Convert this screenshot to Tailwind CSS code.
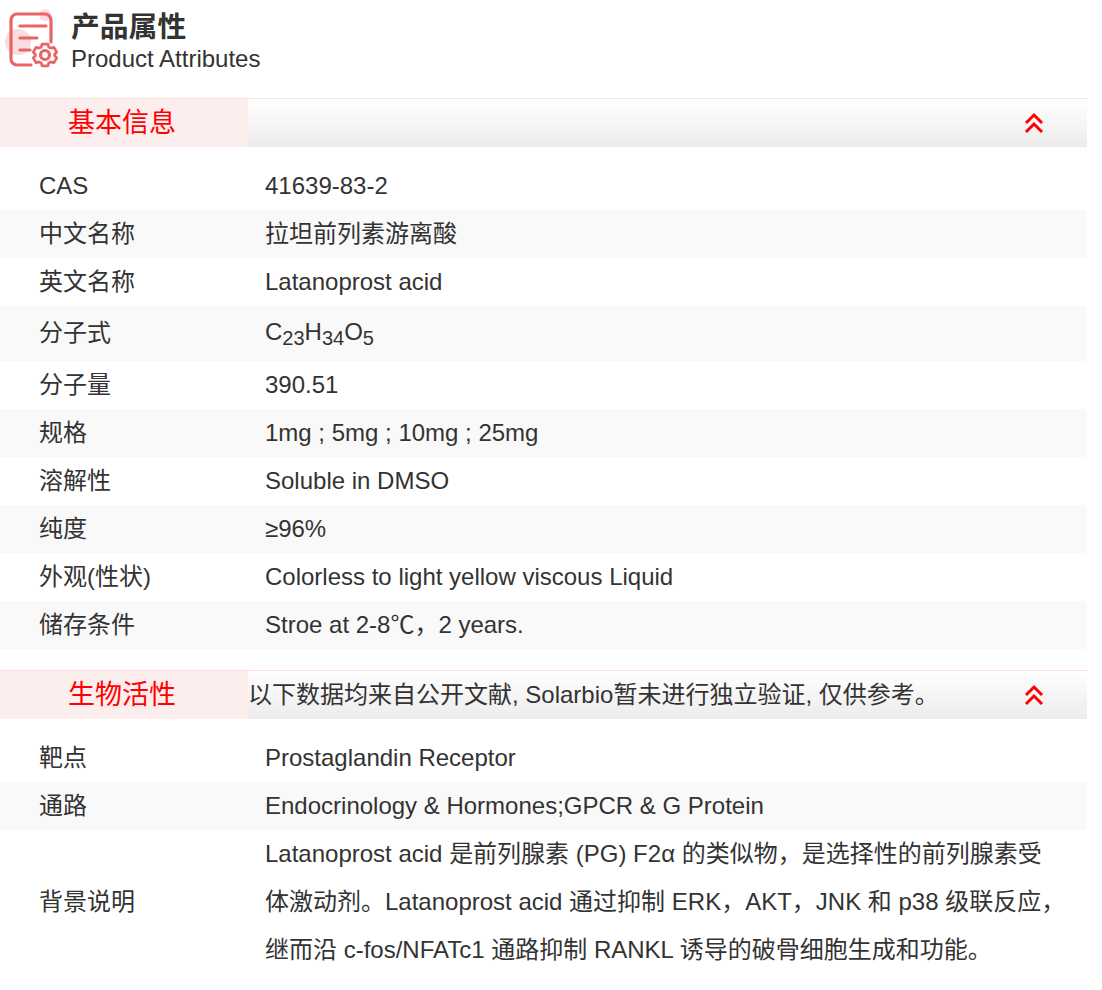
<!DOCTYPE html>
<html lang="zh">
<head>
  <meta charset="UTF-8" />
  <meta name="viewport" content="width=device-width, initial-scale=1" />
  <title>产品属性</title>
  <script src="https://cdn.jsdelivr.net/npm/@tailwindcss/browser@4"></script>
</head>
<body class="bg-white overflow-hidden font-['Liberation_Sans','Noto_Sans_CJK_SC',sans-serif] text-[#333] text-[24px]">
  <div class="w-[1087px]">
    <!-- title -->
    <div class="h-[98px] flex items-start">
      <div class="relative w-[71px] h-[70px] shrink-0">
        <svg class="absolute left-0 top-0 blur-[0.5px]" width="71" height="70" viewBox="0 0 71 70" fill="none" stroke="#e96464" stroke-width="3.2" stroke-linecap="round" stroke-linejoin="round">
          <circle cx="18" cy="42" r="13" fill="#fcdcdc" stroke="none"/>
          <circle cx="45" cy="15" r="6" fill="#fcdcdc" stroke="none"/>
          <path d="M31 65H17a6 6 0 0 1-6-6V20a6 6 0 0 1 6-6h28a6 6 0 0 1 6 6v22"/>
          <path d="M20 26h26M20 38h17M20 50h10"/>
          <path transform="translate(45 55) scale(.84) translate(-45 -55.500)" d="M41.500 42.500h7l1 3.500 2.500 1.300 3.500-1 3.500 5.800-2.500 2.500v1.800l2.500 2.500-3.500 5.800-3.500-1-2.500 1.300-1 3.500h-7l-1-3.500-2.500-1.300-3.500 1-3.500-5.800 2.500-2.500v-1.800l-2.500-2.500 3.500-5.800 3.500 1 2.500-1.300z"/>
          <circle cx="45" cy="55" r="4.500"/>
        </svg>
      </div>
      <div class="pt-[10px]">
        <div class="text-[28.8px] leading-[35px] font-bold">产品属性</div>
        <div class="text-[24px] leading-[28px]">Product Attributes</div>
      </div>
    </div>

    <!-- 基本信息 -->
    <div class="h-[49px] flex border-t border-[#fde0dd]">
      <div class="w-[248px] pr-[4px] bg-[#fdeeee] text-[#f00] text-[27px] flex items-center justify-center">基本信息</div>
      <div class="flex-1 flex items-center justify-end pr-[43px] bg-gradient-to-b from-white to-[#ececec]">
        <svg width="20" height="22" viewBox="0 0 20 22" fill="none" stroke="#f00" stroke-width="3"><path d="M2 11l8-8 8 8M2 20l8-8 8 8"/></svg>
      </div>
    </div>

    <div class="mt-[15px]">
      <div class="h-[48px] flex items-center"><div class="w-[265px] pl-[39px]">CAS</div><div>41639-83-2</div></div>
      <div class="h-[48px] flex items-center bg-[#f9f9f9]"><div class="w-[265px] pl-[39px]">中文名称</div><div>拉坦前列素游离酸</div></div>
      <div class="h-[48px] flex items-center"><div class="w-[265px] pl-[39px]">英文名称</div><div>Latanoprost acid</div></div>
      <div class="h-[55px] flex items-center bg-[#f9f9f9] pb-[2px]"><div class="w-[265px] pl-[39px]">分子式</div><div class="-mt-[2px]">C<sub class="text-[20px]">23</sub>H<sub class="text-[20px]">34</sub>O<sub class="text-[20px]">5</sub></div></div>
      <div class="h-[48px] flex items-center"><div class="w-[265px] pl-[39px]">分子量</div><div>390.51</div></div>
      <div class="h-[48px] flex items-center bg-[#f9f9f9]"><div class="w-[265px] pl-[39px]">规格</div><div>1mg ; 5mg ; 10mg ; 25mg</div></div>
      <div class="h-[48px] flex items-center"><div class="w-[265px] pl-[39px]">溶解性</div><div>Soluble in DMSO</div></div>
      <div class="h-[48px] flex items-center bg-[#f9f9f9]"><div class="w-[265px] pl-[39px]">纯度</div><div>≥96%</div></div>
      <div class="h-[48px] flex items-center"><div class="w-[265px] pl-[39px]">外观(性状)</div><div>Colorless to light yellow viscous Liquid</div></div>
      <div class="h-[48px] flex items-center bg-[#f9f9f9]"><div class="w-[265px] pl-[39px]">储存条件</div><div>Stroe at 2-8℃，2 years.</div></div>
    </div>

    <!-- 生物活性 -->
    <div class="h-[49px] mt-[21px] flex border-t border-[#fde0dd]">
      <div class="w-[248px] pr-[4px] pt-[1px] bg-[#fdeeee] text-[#f00] text-[27px] flex items-center justify-center">生物活性</div>
      <div class="flex-1 flex items-center justify-between pr-[43px] bg-gradient-to-b from-white to-[#ececec]">
        <div class="whitespace-nowrap">以下数据均来自公开文献, Solarbio暂未进行独立验证, 仅供参考。</div>
        <svg width="20" height="22" viewBox="0 0 20 22" fill="none" stroke="#f00" stroke-width="3"><path d="M2 11l8-8 8 8M2 20l8-8 8 8"/></svg>
      </div>
    </div>

    <div class="mt-[15px]">
      <div class="h-[48px] flex items-center"><div class="w-[265px] pl-[39px]">靶点</div><div>Prostaglandin Receptor</div></div>
      <div class="h-[48px] flex items-center bg-[#f9f9f9]"><div class="w-[265px] pl-[39px]">通路</div><div>Endocrinology &amp; Hormones;GPCR &amp; G Protein</div></div>
      <div class="flex items-center">
        <div class="w-[265px] pl-[39px] shrink-0">背景说明</div>
        <div class="leading-[48px] whitespace-nowrap">Latanoprost acid 是前列腺素 (PG) F2α 的类似物，是选择性的前列腺素受<br />体激动剂。Latanoprost acid 通过抑制 ERK，AKT，JNK 和 p38 级联反应，<br />继而沿 c-fos/NFATc1 通路抑制 RANKL 诱导的破骨细胞生成和功能。</div>
      </div>
    </div>
  </div>
</body>
</html>
